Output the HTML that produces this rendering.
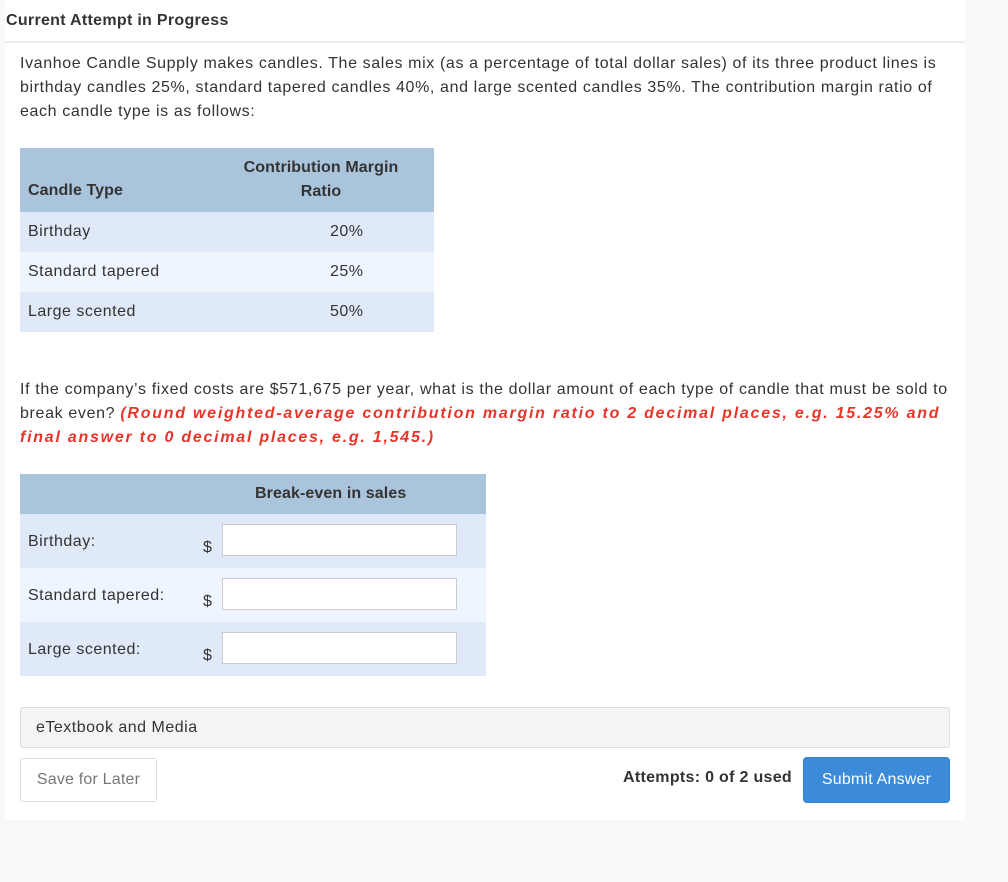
<!DOCTYPE html>
<html><head><style>
body{margin:0;width:1008px;height:882px;background:#f9f9f9;font-family:"Liberation Sans",sans-serif;color:#333;position:relative;overflow:hidden;letter-spacing:0.5px}
.panel{position:absolute;left:5px;top:0;width:960px;height:820px;background:#fff}
.a{position:absolute;white-space:nowrap}
.p{font-size:16px;line-height:24px;color:#333}
.red{color:#e8352a;font-weight:bold;font-style:italic;letter-spacing:1.75px}
.inp{position:absolute;left:222px;width:235px;height:32px;border:1px solid #ccc;background:#fff;box-sizing:border-box}
</style></head><body>
<div class="panel"></div>
<div class="a" style="left:6px;top:12px;font-size:16px;font-weight:bold;color:#333;letter-spacing:0.3px">Current Attempt in Progress</div>
<div class="a" style="left:5px;top:41px;width:960px;height:2px;background:#eee"></div>
<div class="a p" style="left:20px;top:52px;letter-spacing:0.62px">Ivanhoe Candle Supply makes candles. The sales mix (as a percentage of total dollar sales) of its three product lines is<br>birthday candles 25%, standard tapered candles 40%, and large scented candles 35%. The contribution margin ratio of<br>each candle type is as follows:</div>

<div class="a" style="left:20px;top:148px;width:414px;height:64px;background:#aac4dc"></div>
<div class="a" style="left:20px;top:212px;width:414px;height:40px;background:#dfe9f7"></div>
<div class="a" style="left:20px;top:252px;width:414px;height:40px;background:#eef5fe"></div>
<div class="a" style="left:20px;top:292px;width:414px;height:40px;background:#dfe9f7"></div>
<div class="a" style="left:28px;top:182px;font-size:16px;font-weight:bold;letter-spacing:0.1px">Candle Type</div>
<div class="a" style="left:226px;top:156px;width:190px;text-align:center;font-size:16px;font-weight:bold;line-height:24px;letter-spacing:0.1px">Contribution Margin<br>Ratio</div>
<div class="a p" style="left:28px;top:220px">Birthday</div>
<div class="a p" style="left:330px;top:220px">20%</div>
<div class="a p" style="left:28px;top:260px">Standard tapered</div>
<div class="a p" style="left:330px;top:260px">25%</div>
<div class="a p" style="left:28px;top:300px">Large scented</div>
<div class="a p" style="left:330px;top:300px">50%</div>

<div class="a p" style="left:20px;top:378px;letter-spacing:0.65px">If the company’s fixed costs are $571,675 per year, what is the dollar amount of each type of candle that must be sold to<br>break even? <span class="red">(Round weighted-average contribution margin ratio to 2 decimal places, e.g. 15.25% and</span><br><span class="red">final answer to 0 decimal places, e.g. 1,545.)</span></div>

<div class="a" style="left:20px;top:474px;width:466px;height:40px;background:#aac4dc"></div>
<div class="a" style="left:20px;top:514px;width:466px;height:54px;background:#dfe9f7"></div>
<div class="a" style="left:20px;top:568px;width:466px;height:54px;background:#eef5fe"></div>
<div class="a" style="left:20px;top:622px;width:466px;height:54px;background:#dfe9f7"></div>
<div class="a" style="left:255px;top:485px;font-size:16px;font-weight:bold;letter-spacing:0.1px">Break-even in sales</div>
<div class="a p" style="left:28px;top:530px">Birthday:</div>
<div class="a p" style="left:28px;top:584px">Standard tapered:</div>
<div class="a p" style="left:28px;top:638px">Large scented:</div>
<div class="a p" style="left:203px;top:536px">$</div>
<div class="a p" style="left:203px;top:590px">$</div>
<div class="a p" style="left:203px;top:644px">$</div>
<div class="inp" style="top:524px"></div>
<div class="inp" style="top:578px"></div>
<div class="inp" style="top:632px"></div>

<div class="a" style="left:20px;top:707px;width:930px;height:41px;background:#f4f4f4;border:1px solid #ddd;border-radius:3px;box-sizing:border-box"></div>
<div class="a p" style="left:36px;top:716px">eTextbook and Media</div>
<div class="a" style="left:20px;top:758px;width:137px;height:44px;border:1px solid #ddd;border-radius:3px;box-sizing:border-box;font-size:16px;color:#777;line-height:42px;text-align:center;letter-spacing:0.2px">Save for Later</div>
<div class="a" style="left:623px;top:769px;font-size:16px;font-weight:bold;letter-spacing:0.3px">Attempts: 0 of 2 used</div>
<div class="a" style="left:803px;top:757px;width:147px;height:46px;background:#3b8bd9;border:1px solid #3480cb;border-radius:4px;box-sizing:border-box;color:#fff;font-size:16px;line-height:44px;text-align:center;letter-spacing:0.2px">Submit Answer</div>
</body></html>
